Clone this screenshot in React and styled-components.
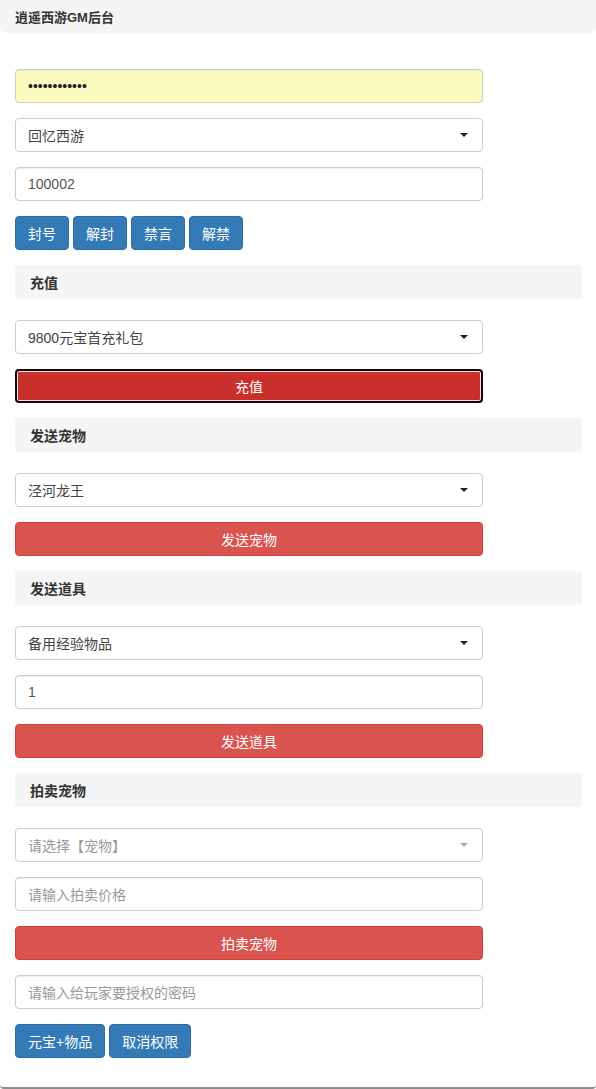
import styled, { createGlobalStyle } from "styled-components";

const GlobalStyle = createGlobalStyle`
  html, body {
    margin: 0;
    padding: 0;
    background: #fff;
  }
  body {
    font-family: "Liberation Sans", "Noto Sans CJK SC", sans-serif;
    font-size: 14px;
    color: #333;
  }
`;

const Caret = ({ muted }) => (
  <CaretIcon viewBox="0 0 8 4" muted={muted}>
    <path d="M0 0h8L4 4z" />
  </CaretIcon>
);

const App = () => {
  return (
    <Panel>
      <GlobalStyle />
      <TopBar>逍遥西游GM后台</TopBar>
      <Body>
        <Field type="password" autofill>••••••••••••</Field>
        <Select>
          回忆西游
          <Caret />
        </Select>
        <Field>100002</Field>
        <ButtonRow>
          <Button>封号</Button>
          <Button>解封</Button>
          <Button>禁言</Button>
          <Button>解禁</Button>
        </ButtonRow>

        <SectionTitle>充值</SectionTitle>
        <Select>
          9800元宝首充礼包
          <Caret />
        </Select>
        <Button variant="danger" focused wide>充值</Button>

        <SectionTitle>发送宠物</SectionTitle>
        <Select>
          泾河龙王
          <Caret />
        </Select>
        <Button variant="danger" wide>发送宠物</Button>

        <SectionTitle>发送道具</SectionTitle>
        <Select>
          备用经验物品
          <Caret />
        </Select>
        <Field>1</Field>
        <Button variant="danger" wide>发送道具</Button>

        <SectionTitle>拍卖宠物</SectionTitle>
        <Select placeholder>
          请选择【宠物】
          <Caret muted />
        </Select>
        <Field placeholder>请输入拍卖价格</Field>
        <Button variant="danger" wide>拍卖宠物</Button>
        <Field placeholder>请输入给玩家要授权的密码</Field>
        <ButtonRow>
          <Button>元宝+物品</Button>
          <Button>取消权限</Button>
        </ButtonRow>
      </Body>
    </Panel>
  );
};

export default App;

const Panel = styled.div`
  width: 596px;
  height: 1089px;
  overflow: hidden;
  box-sizing: border-box;
  border-bottom: 2px solid #8c8c8c;
  border-radius: 0 0 4px 4px;
`;

const TopBar = styled.div`
  height: 33px;
  box-sizing: border-box;
  padding: 0 15px;
  display: flex;
  align-items: center;
  background: #f5f5f5;
  border-radius: 0 0 6px 6px;
  font-size: 13px;
  font-weight: bold;
  color: #333;
`;

const Body = styled.div`
  padding: 36px 14px 0 15px;
  display: flex;
  flex-direction: column;
  align-items: flex-start;
`;

const controlBox = `
  width: 468px;
  height: 34px;
  flex-shrink: 0;
  box-sizing: border-box;
  border: 1px solid #ccc;
  border-radius: 4px;
  display: flex;
  align-items: center;
  font-size: 14px;
  margin-bottom: 15px;
`;

const Field = styled.div`
  ${controlBox}
  padding: 0 12px;
  background: ${(p) => (p.autofill ? "#fbfdc0" : "#fff")};
  color: ${(p) => (p.placeholder ? "#999" : p.autofill ? "#222" : "#555")};
  box-shadow: inset 0 1px 1px rgba(0, 0, 0, 0.075);
`;

const Select = styled.div`
  ${controlBox}
  padding: 0 12px;
  justify-content: space-between;
  background: #fff;
  color: ${(p) => (p.placeholder ? "#999" : "#444")};
`;

const CaretIcon = styled.svg`
  width: 8px;
  height: 4px;
  margin-right: 2px;
  fill: ${(p) => (p.muted ? "#aaa" : "#222")};
`;

const ButtonRow = styled.div`
  display: flex;
  gap: 4px;
  margin-bottom: 15px;
`;

const Button = styled.button`
  height: 34px;
  flex-shrink: 0;
  box-sizing: border-box;
  padding: 0 12px;
  font-family: "Liberation Sans", "Noto Sans CJK SC", sans-serif;
  font-size: 14px;
  color: #fff;
  border-radius: 4px;
  cursor: pointer;
  width: ${(p) => (p.wide ? "468px" : "auto")};
  margin-bottom: ${(p) => (p.wide ? "15px" : "0")};
  background: ${(p) =>
    p.variant === "danger" ? (p.focused ? "#c9302c" : "#d9534f") : "#337ab7"};
  border: ${(p) =>
    p.focused
      ? "2px solid #1c0505"
      : `1px solid ${p.variant === "danger" ? "#d43f3a" : "#2e6da4"}`};
  box-shadow: ${(p) => (p.focused ? "inset 0 0 0 1px #f3e4e4" : "none")};
`;

const SectionTitle = styled.div`
  width: 567px;
  height: 34px;
  flex-shrink: 0;
  box-sizing: border-box;
  padding: 0 15px;
  display: flex;
  align-items: center;
  background: #f5f5f5;
  border-radius: 3px;
  font-size: 14px;
  font-weight: bold;
  color: #333;
  margin-bottom: 21px;
`;
